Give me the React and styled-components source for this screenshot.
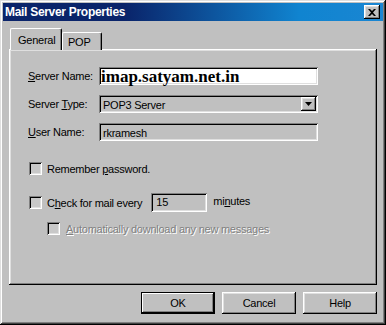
import React from "react";
import styled, { createGlobalStyle } from "styled-components";

const GlobalStyle = createGlobalStyle`
  html, body {
    margin: 0;
    padding: 0;
    background: #c0c0c0;
  }
  body {
    font-family: "Liberation Sans", Arial, sans-serif;
    font-size: 11px;
    letter-spacing: -0.25px;
    color: #000;
  }
`;

const sunken = `
  box-shadow: inset 1px 1px 0 #808080, inset -1px -1px 0 #ffffff,
    inset 2px 2px 0 #000000, inset -2px -2px 0 #dfdfdf;
`;

const raised = `
  box-shadow: inset -1px -1px 0 #000000, inset 1px 1px 0 #ffffff,
    inset -2px -2px 0 #808080, inset 2px 2px 0 #dfdfdf;
`;

const Window = styled.div`
  box-sizing: border-box;
  width: 386px;
  height: 325px;
  padding: 3px;
  background: #c0c0c0;
  display: flex;
  flex-direction: column;
  box-shadow: inset -1px -1px 0 #000000, inset 1px 1px 0 #dfdfdf,
    inset -2px -2px 0 #404040, inset 2px 2px 0 #ffffff,
    inset -3px -3px 0 #808080;
`;

const TitleBar = styled.div`
  height: 18px;
  display: flex;
  align-items: center;
  justify-content: space-between;
  padding: 0 3px 0 2px;
  background: linear-gradient(90deg, #0a246a 0%, #0a246a 32%, #1084d0 78%, #1a86d2 100%);
`;

const Title = styled.span`
  color: #fff;
  font-weight: bold;
  font-size: 12px;
  letter-spacing: -0.3px;
`;

const CloseButton = styled.div`
  width: 16px;
  height: 14px;
  background: #c0c0c0;
  display: flex;
  align-items: center;
  justify-content: center;
  ${raised}
`;

const Body = styled.div`
  flex: 1;
  display: flex;
  flex-direction: column;
  padding: 7px 6px 0 6px;
`;

const TabRow = styled.div`
  display: flex;
  align-items: flex-end;
  height: 22px;
  padding-left: 1px;
  margin-bottom: -1px;
  position: relative;
  z-index: 1;
`;

const Tab = styled.div`
  box-sizing: border-box;
  height: ${(p) => (p.$active ? "22px" : "18px")};
  width: ${(p) => p.$w}px;
  padding: ${(p) => (p.$active ? "5px 0 0 7px" : "3px 0 0 5px")};
  background: #c0c0c0;
  border-top: 1px solid #ffffff;
  border-left: 1px solid #ffffff;
  border-right: 1px solid #000000;
  border-radius: 2px 2px 0 0;
  box-shadow: inset -1px 0 0 #808080;
  font-size: 11px;
  line-height: 13px;
`;

const Panel = styled.div`
  box-sizing: border-box;
  height: 236px;
  background: #c0c0c0;
  padding: 18px 0 0 19px;
  box-shadow: inset -1px -1px 0 #000000, inset 1px 1px 0 #ffffff,
    inset -2px -2px 0 #808080, inset 2px 2px 0 #dfdfdf;
`;

const FieldGrid = styled.div`
  display: grid;
  grid-template-columns: 71px 219px;
  grid-auto-rows: 18px;
  row-gap: 10px;
  align-items: center;
`;

const Label = styled.span`
  font-size: 11px;
  white-space: nowrap;
  color: #000;
`;

const Field = styled.div`
  box-sizing: border-box;
  height: 18px;
  display: flex;
  align-items: center;
  padding-left: ${(p) => (p.$big ? "2px" : "4px")};
  background: ${(p) => (p.$white ? "#ffffff" : "#c0c0c0")};
  overflow: visible;
  white-space: nowrap;
  position: relative;
  ${sunken}
`;

const BigText = styled.span`
  font-family: "Liberation Serif", "Times New Roman", serif;
  font-weight: bold;
  font-size: 17px;
  letter-spacing: 0;
  line-height: 18px;
  margin-top: 1px;
`;

const FieldText = styled.span`
  font-size: 11px;
  margin-top: 1px;
`;

const DropButton = styled.div`
  position: absolute;
  right: 2px;
  top: 2px;
  width: 15px;
  height: 14px;
  background: #c0c0c0;
  display: flex;
  align-items: center;
  justify-content: center;
  ${raised}
`;

const CheckRow = styled.div`
  display: flex;
  align-items: center;
  height: ${(p) => p.$h || 13}px;
  margin-top: ${(p) => p.$mt}px;
  margin-left: ${(p) => p.$ml || 1}px;
  white-space: nowrap;
`;

const Box = styled.div`
  box-sizing: border-box;
  width: 13px;
  height: 13px;
  flex: none;
  background: #c8c8c8;
  ${sunken}
`;

const CheckLabel = styled.span`
  font-size: 11px;
  margin-left: ${(p) => p.$gap || 5}px;
  color: ${(p) => (p.$disabled ? "#808080" : "#000")};
  text-shadow: ${(p) => (p.$disabled ? "1px 1px 0 #ffffff" : "none")};
`;

const SmallField = styled.div`
  box-sizing: border-box;
  width: 56px;
  height: 19px;
  margin-left: 9px;
  padding: 3px 0 0 5px;
  font-size: 11px;
  background: #c0c0c0;
  ${sunken}
`;

const Suffix = styled.span`
  font-size: 11px;
  margin-left: 6px;
  margin-top: -3px;
`;

const ButtonRow = styled.div`
  display: flex;
  justify-content: flex-end;
  gap: 7px;
  margin-top: 7px;
`;

const Button = styled.div`
  box-sizing: border-box;
  width: 74px;
  height: 22px;
  display: flex;
  align-items: center;
  justify-content: center;
  font-size: 11px;
  background: #c0c0c0;
  ${(p) =>
    p.$default
      ? `box-shadow: inset 0 0 0 1px #000000, inset -2px -2px 0 #000000,
          inset 2px 2px 0 #ffffff, inset -3px -3px 0 #808080;`
      : raised}
`;

const U = styled.span`
  text-decoration: underline;
`;

const App = () => {
  return (
    <>
      <GlobalStyle />
      <Window>
        <TitleBar>
          <Title>Mail Server Properties</Title>
          <CloseButton>
            <svg width="8" height="7" viewBox="0 0 8 7">
              <path d="M0 0h2l2 2 2-2h2L5 3.5 8 7H6L4 5 2 7H0l3-3.5z" fill="#000" />
            </svg>
          </CloseButton>
        </TitleBar>
        <Body>
          <TabRow>
            <Tab $active $w={52}>General</Tab>
            <Tab $w={40}>POP</Tab>
          </TabRow>
          <Panel>
            <FieldGrid>
              <Label>
                <U>S</U>erver Name:
              </Label>
              <Field $white $big>
                <BigText>imap.satyam.net.in</BigText>
              </Field>
              <Label>
                Server <U>T</U>ype:
              </Label>
              <Field>
                <FieldText>POP3 Server</FieldText>
                <DropButton>
                  <svg width="7" height="4" viewBox="0 0 7 4">
                    <path d="M0 0h7L3.5 4z" fill="#000" />
                  </svg>
                </DropButton>
              </Field>
              <Label>
                <U>U</U>ser Name:
              </Label>
              <Field>
                <FieldText>rkramesh</FieldText>
              </Field>
            </FieldGrid>
            <CheckRow $mt={21}>
              <Box />
              <CheckLabel>
                Remember <U>p</U>assword.
              </CheckLabel>
            </CheckRow>
            <CheckRow $mt={18} $h={19}>
              <Box />
              <CheckLabel>
                C<U>h</U>eck for mail every
              </CheckLabel>
              <SmallField>15</SmallField>
              <Suffix>
                mi<U>n</U>utes
              </Suffix>
            </CheckRow>
            <CheckRow $mt={10} $ml={19}>
              <Box />
              <CheckLabel $disabled $gap={6}>
                <U>A</U>utomatically download any new messages
              </CheckLabel>
            </CheckRow>
          </Panel>
          <ButtonRow>
            <Button $default>OK</Button>
            <Button>Cancel</Button>
            <Button>Help</Button>
          </ButtonRow>
        </Body>
      </Window>
    </>
  );
};

export default App;
